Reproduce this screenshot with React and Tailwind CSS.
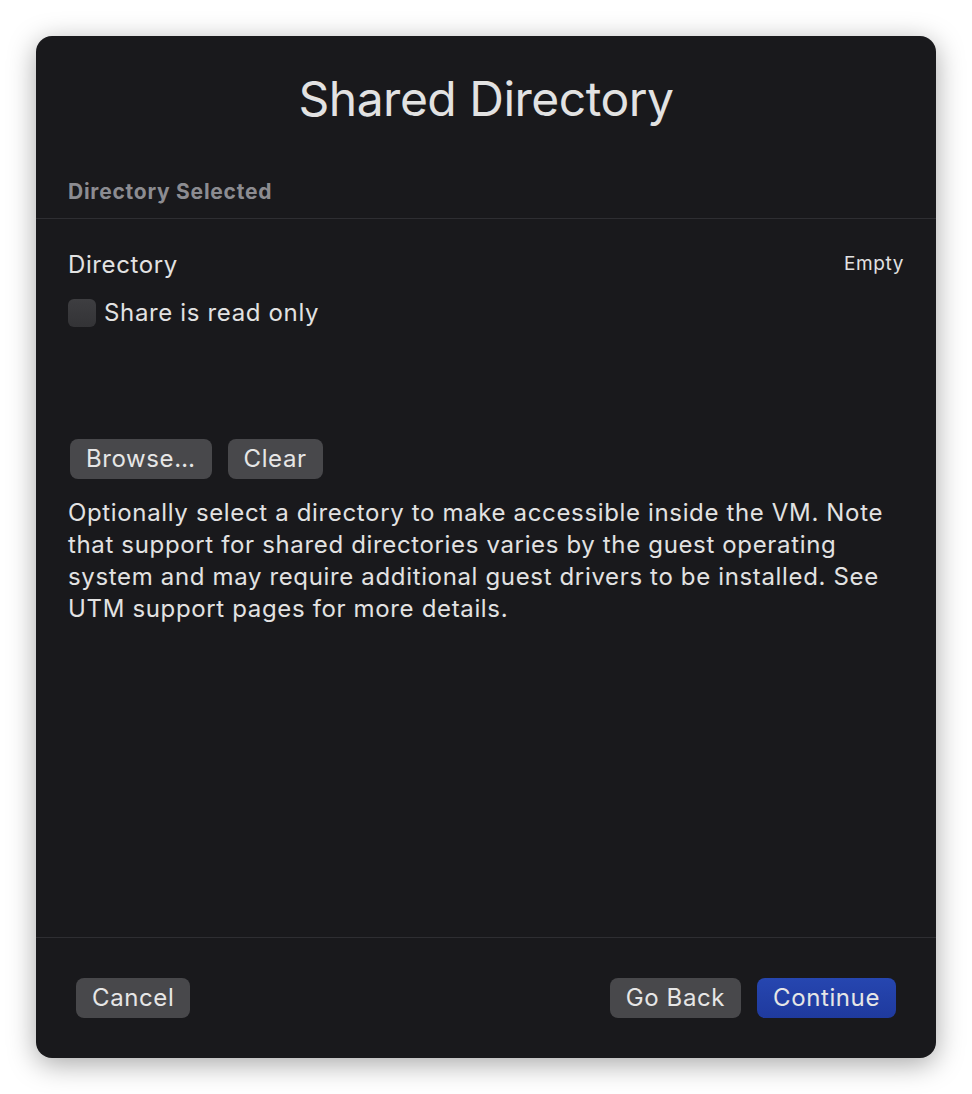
import React from "react";

const Button = ({ children, primary, className = "" }) => (
  <button
    className={`h-10 rounded-lg px-4 text-[24px] leading-none tracking-[0.6px] text-[#e6e6e6] ${
      primary ? "bg-gradient-to-b from-[#2646b0] to-[#1f3a9e]" : "bg-[#48484b]"
    } ${className}`}
  >
    {children}
  </button>
);

export default function App() {
  return (
    <div
      className="min-h-[1094px] bg-white p-9"
      style={{ fontFamily: "Inter, 'Noto Sans', sans-serif" }}
    >
      <div className="flex h-[1022px] w-[900px] flex-col rounded-2xl bg-[#19191c] shadow-[0_6px_28px_rgba(0,0,0,0.35)]">
        <div className="flex h-[130px] items-center justify-center pb-1">
          <h1 className="text-[48px] font-normal tracking-[-0.5px] text-[#e2e2e2]">
            Shared Directory
          </h1>
        </div>

        <div className="border-b border-[#2e2e32] px-8 pb-[10px] pt-[10px]">
          <div className="text-[21px] font-bold tracking-[0.75px] text-[#8c8c91]">
            Directory Selected
          </div>
        </div>

        <div className="flex flex-1 flex-col px-8 pt-[28px]">
          <div className="flex items-center justify-between">
            <span className="text-[24px] tracking-[0.6px] text-[#e2e2e2]">Directory</span>
            <span className="text-[19px] tracking-[0.6px] text-[#e2e2e2]">Empty</span>
          </div>
          <label className="mt-[12px] flex items-center gap-2">
            <span className="h-7 w-7 rounded-md bg-gradient-to-b from-[#3e3e41] to-[#333336]" />
            <span className="text-[24px] tracking-[0.65px] text-[#e2e2e2]">Share is read only</span>
          </label>

          <div className="mt-[108px] flex gap-4 pl-[2px]">
            <Button>Browse…</Button>
            <Button>Clear</Button>
          </div>

          <p className="mt-[18px] text-[24px] leading-[32px] tracking-[0.65px] text-[#e2e2e2]">
            Optionally select a directory to make accessible inside the VM. Note that support for
            shared directories varies by the guest operating system and may require additional
            guest drivers to be installed. See UTM support pages for more details.
          </p>
        </div>

        <div className="flex h-[121px] items-center justify-between border-t border-[#2e2e32] px-10 pb-[1px]">
          <Button>Cancel</Button>
          <div className="flex gap-4">
            <Button>Go Back</Button>
            <Button primary>Continue</Button>
          </div>
        </div>
      </div>
    </div>
  );
}
